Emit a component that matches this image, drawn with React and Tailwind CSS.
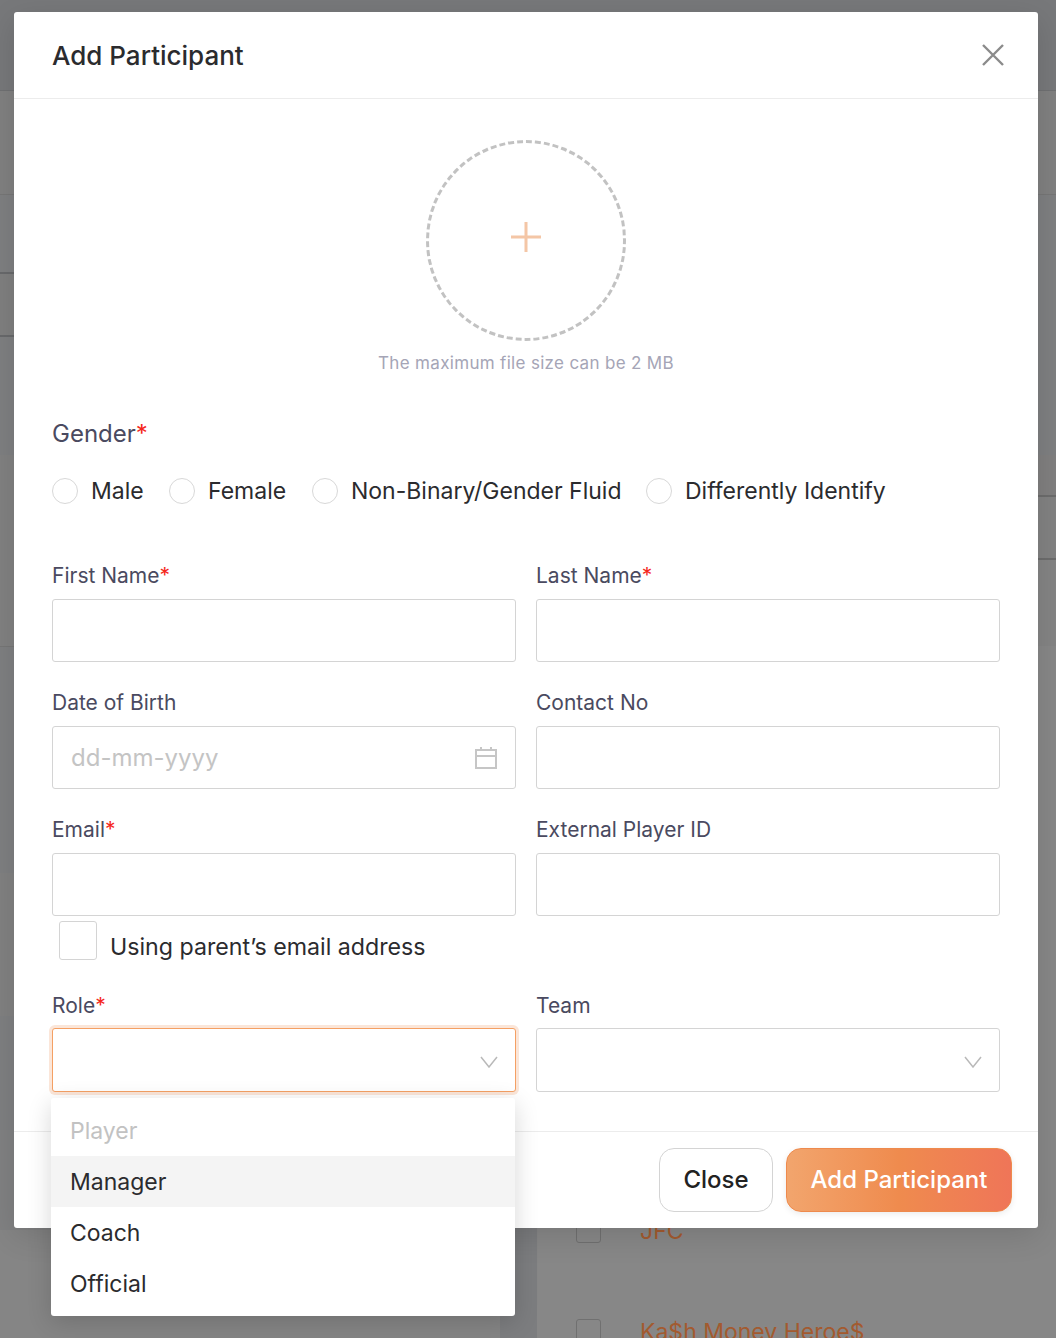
const leftRows = [
  'h-[104px] bg-[#808080] border-t border-[#6f7072]',
  'h-[78px] bg-[#7e7f81] border-t border-[#767676]',
  'h-[63px] bg-[#7f7f7f] border-t-2 border-[#68696b]',
  'h-[120px] bg-[#7e7f81] border-t-2 border-[#68696b]',
  'h-[191px] bg-[#818181]',
  'h-[227px] bg-[#7e7f81] border-t border-[#767676]',
  'h-[143px] bg-[#818181]',
  'h-[114px] bg-[#7e7f81]',
  'h-[100px] bg-[#808182]',
]

const rightRows = [
  'h-[104px] bg-[#808080] border-t border-[#6f7072]',
  'h-[261px] bg-[#7e7f81] border-t border-[#767676]',
  'h-[40px] bg-[#807f7f]',
  'h-[63px] bg-[#828282] border-t-2 border-[#6c6c6c]',
  'h-[88px] bg-[#848484] border-t-2 border-[#6c6c6c]',
]

// `low` sits the label a pixel lower, as on the Role/Team row
function Field({ label, required, low, children }) {
  const box = low ? 'mb-[10px] h-[26px] leading-[27px]' : 'mb-[11px] h-[25px] leading-[25px]'
  return (
    <div>
      <label className={`block text-[21px] text-[#4a4a60] ${box}`}>
        {label}
        {required && <span className="text-[#f5271d]">*</span>}
      </label>
      {children}
    </div>
  )
}

function TextInput() {
  return <input type="text" className="block h-[63px] w-full rounded-[3px] border border-[#d4d4d4] bg-white px-[18px] outline-none" />
}

function Chevron() {
  return (
    <svg width="18" height="12" viewBox="0 0 18 12" fill="none" stroke="#b9b9b9" strokeWidth="1.5" className="absolute right-[17px] top-[27px]">
      <path d="M1 1l8 10 8-10" />
    </svg>
  )
}

function Gender({ label, className }) {
  return (
    <label className={`flex items-center ${className}`}>
      <input type="radio" name="gender" className="h-[26px] w-[26px] appearance-none rounded-full border border-[#d8d8d8] bg-white" />
      <span className="ml-[13px] text-[23px] leading-[30px] text-[#2b2b2e]">{label}</span>
    </label>
  )
}

function Backdrop() {
  return (
    <div className="flex h-full flex-col">
      <div className="h-[90px] shrink-0 bg-[#77787a]" />
      <div className="flex flex-1">
        <div className="w-[500px] shrink-0">
          {leftRows.map((row, i) => (
            <div key={i} className={row} />
          ))}
        </div>
        <div className="w-[37px] shrink-0 bg-[#7c7d7f]" />
        <div className="flex-1 bg-[#878787]">
          {rightRows.map((row, i) => (
            <div key={i} className={row} />
          ))}
          <div className="mt-[572px] flex h-[101px] items-start gap-[39px] pl-[39px]">
            <span className="h-[25px] w-[25px] shrink-0 rounded-[3px] border border-[#707070]" />
            <span className="text-[23px] leading-[26px] text-[#a35a2f]">JFC</span>
          </div>
          <div className="flex items-start gap-[39px] pl-[39px]">
            <span className="h-[25px] w-[25px] shrink-0 rounded-[3px] border border-[#707070]" />
            <span className="whitespace-nowrap text-[23px] leading-[26px] text-[#a35a2f]">Ka$h Money Heroe$</span>
          </div>
        </div>
      </div>
    </div>
  )
}

export default function App() {
  return (
    <div className="relative h-[1338px] w-[1056px] overflow-hidden bg-[#858585] font-[Inter,sans-serif]">
      <Backdrop />

      <div className="absolute left-[14px] top-[12px] flex h-[1216px] w-[1024px] flex-col rounded-[3px] bg-white shadow-[0_8px_30px_rgba(0,0,0,0.12)]">
        <div className="flex h-[87px] shrink-0 items-center justify-between border-b border-[#ececec] pl-[38px] pr-[33px]">
          <h2 className="mt-[2px] text-[26px] font-[450] leading-[32px] text-[#2b2b2e]">Add Participant</h2>
          <svg width="24" height="24" viewBox="0 0 24 24" fill="none" stroke="#8b8b8b" strokeWidth="2.4">
            <path d="M2 2l20 20M22 2L2 22" />
          </svg>
        </div>

        <div className="flex-1 px-[38px] pt-[41px]">
          <div className="flex flex-col items-center">
            <div className="flex h-[201px] w-[200px] items-center justify-center rounded-full border-[3px] border-dashed border-[#c2c2c2] pb-[8px]">
              <svg width="32" height="32" viewBox="0 0 32 32" stroke="#f4c6a6" strokeWidth="3">
                <path d="M16 1v30M1 16h30" />
              </svg>
            </div>
            <p className="mt-[11px] text-[17px] leading-[22px] tracking-[0.32px] text-[#a5a5b6]">The maximum file size can be 2 MB</p>
          </div>

          <div className="mt-[45px] text-[24px] leading-[30px] text-[#4a4a60]">
            Gender<span className="text-[#f5271d]">*</span>
          </div>
          <div className="mt-[27px] flex items-center">
            <Gender label="Male" className="w-[117px]" />
            <Gender label="Female" className="w-[143px]" />
            <Gender label="Non-Binary/Gender Fluid" className="w-[334px]" />
            <Gender label="Differently Identify" />
          </div>

          <div className="mt-[57px] grid grid-cols-2 gap-x-[20px] gap-y-[28px]">
            <Field label="First Name" required><TextInput /></Field>
            <Field label="Last Name" required><TextInput /></Field>
            <Field label="Date of Birth">
              <div className="flex h-[63px] items-center justify-between rounded-[3px] border border-[#d4d4d4] pl-[18px] pr-[17px]">
                <span className="text-[24px] text-[#c4c4c4]">dd-mm-yyyy</span>
                <svg width="24" height="24" viewBox="0 0 24 24" fill="none" stroke="#c6c6c6" strokeWidth="2">
                  <rect x="2" y="4" width="20" height="18" />
                  <path d="M2 10h20M7 1v4M17 1v4" />
                </svg>
              </div>
            </Field>
            <Field label="Contact No"><TextInput /></Field>
            <Field label="Email" required>
              <TextInput />
            </Field>
            <Field label="External Player ID"><TextInput /></Field>
          </div>

          <div className="ml-[7px] mt-[5px] flex h-[39px] items-center">
            <input type="checkbox" className="h-[39px] w-[38px] appearance-none rounded-[3px] border border-[#d4d4d4] bg-white" />
            <span className="ml-[13px] mt-[12px] text-[23.2px] leading-[30px] text-[#2b2b2e]">Using parent’s email address</span>
          </div>

          <div className="mt-[32px] grid grid-cols-2 gap-x-[20px]">
            <div className="relative z-10">
              <Field label="Role" required low>
                <div className="relative h-[64px] rounded-[3px] border border-[#f4a064] bg-white shadow-[0_0_0_3px_#fbe6d9]">
                  <Chevron />
                </div>
              </Field>
              <ul className="absolute left-[-1px] right-[1px] top-[106px] rounded-[3px] bg-white py-[7px] text-[23px] leading-[53px] text-[#2b2b2e] shadow-[0_6px_24px_rgba(0,0,0,0.16)]">
                <li className="h-[51px] px-[19px] text-[#c2c2c2]">Player</li>
                <li className="h-[51px] bg-[#f4f4f4] px-[19px]">Manager</li>
                <li className="h-[51px] px-[19px]">Coach</li>
                <li className="h-[51px] px-[19px]">Official</li>
              </ul>
            </div>
            <Field label="Team" low>
              <div className="relative h-[64px] rounded-[3px] border border-[#d4d4d4] bg-white">
                <Chevron />
              </div>
            </Field>
          </div>
        </div>

        <div className="flex h-[97px] shrink-0 items-start justify-end gap-[13px] border-t border-[#ececec] pr-[26px] pt-[16px]">
          <button type="button" className="h-[64px] w-[114px] rounded-[15px] border border-[#d4d4d4] bg-white text-[24px] font-medium text-[#222]">
            Close
          </button>
          <button type="button" className="h-[64px] w-[226px] rounded-[15px] border border-[#ee8a4d] bg-linear-to-r from-[#f2a56d] via-[#ef8b4e] to-[#ef7558] text-[24px] font-medium text-white shadow-[0_2px_6px_rgba(0,0,0,0.08)]">
            Add Participant
          </button>
        </div>
      </div>
    </div>
  )
}
